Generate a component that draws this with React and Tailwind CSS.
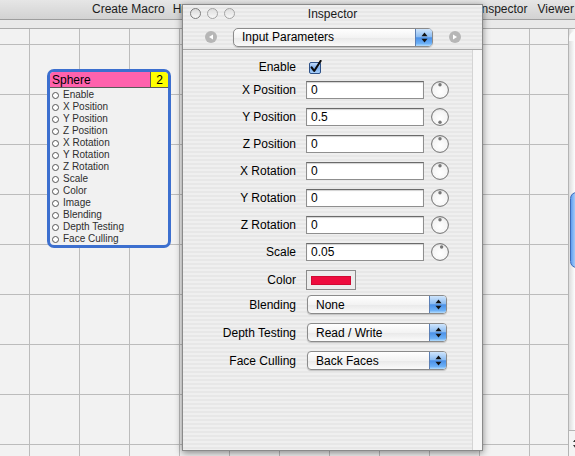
import React from 'react';

// Quartz Composer editor: canvas with a Sphere patch and the floating Inspector panel

const NODE_PORTS = [
  'Enable', 'X Position', 'Y Position', 'Z Position', 'X Rotation', 'Y Rotation',
  'Z Rotation', 'Scale', 'Color', 'Image', 'Blending', 'Depth Testing', 'Face Culling',
];

const FIELDS = [
  { label: 'X Position', value: '0', knob: 0 },
  { label: 'Y Position', value: '0.5', knob: 0.5 },
  { label: 'Z Position', value: '0', knob: 0 },
  { label: 'X Rotation', value: '0', knob: 0 },
  { label: 'Y Rotation', value: '0', knob: 0 },
  { label: 'Z Rotation', value: '0', knob: 0 },
  { label: 'Scale', value: '0.05', knob: 0.05 },
];

const Stepper = () => (
  <svg width="7" height="11" viewBox="0 0 7 11">
    <polygon points="3.5,0.5 0.5,4.3 6.5,4.3" fill="#111" />
    <polygon points="0.5,6.7 6.5,6.7 3.5,10.5" fill="#111" />
  </svg>
);

const Popup = ({ label, className = '' }) => (
  <div
    className={`flex h-[19px] items-stretch rounded-[4px] border border-[#8b8b8b] bg-[linear-gradient(to_bottom,#ffffff,#f3f3f3_50%,#e9e9e9_52%,#fafafa)] shadow-[0_1px_1px_rgba(0,0,0,0.18)] ${className}`}
  >
    <span className="flex flex-1 items-center pl-[8px] text-[12px] leading-none text-black">{label}</span>
    <span className="flex w-[17px] items-center justify-center rounded-r-[3px] border-l border-[#5b7fb4] bg-[linear-gradient(to_bottom,#cfe5fc,#8dbdf2_45%,#4b91e8_52%,#6cb0f6_85%,#b4dcfc)]">
      <Stepper />
    </span>
  </div>
);

const Knob = ({ value }) => {
  const a = value * 2 * Math.PI;
  const dx = 9 + Math.sin(a) * 5.2;
  const dy = 9 - Math.cos(a) * 5.2;
  return (
    <svg width="18" height="18" viewBox="0 0 18 18" className="ml-[7px] shrink-0">
      <defs>
        <radialGradient id="knobFill" cx="50%" cy="60%" r="60%">
          <stop offset="0" stopColor="#ffffff" />
          <stop offset="0.75" stopColor="#f4f4f4" />
          <stop offset="1" stopColor="#d6d6d6" />
        </radialGradient>
      </defs>
      <circle cx="9" cy="9" r="8.4" fill="url(#knobFill)" stroke="#707070" strokeWidth="1" />
      <circle cx={dx} cy={dy} r="1.7" fill="#777" />
    </svg>
  );
};

const Checkbox = () => (
  <svg width="14" height="14" viewBox="0 0 14 14" className="ml-[12px]">
    <defs>
      <linearGradient id="cbFill" x1="0" y1="0" x2="0" y2="1">
        <stop offset="0" stopColor="#c6defa" />
        <stop offset="0.5" stopColor="#7fb0ee" />
        <stop offset="1" stopColor="#a8d0fa" />
      </linearGradient>
    </defs>
    <rect x="1.5" y="2.5" width="11" height="11" rx="1.5" fill="url(#cbFill)" stroke="#2f5288" />
    <path d="M3.6 7.4 L6.2 11 L12.6 1" fill="none" stroke="#0b0b0b" strokeWidth="2.1" strokeLinecap="round" strokeLinejoin="round" />
  </svg>
);

const NavButton = ({ dir }) => (
  <span className="flex h-[12px] w-[12px] items-center justify-center rounded-full bg-[#b6b6b6]">
    <svg width="6" height="6" viewBox="0 0 6 6">
      {dir === 'left' ? (
        <polygon points="1,3 5,0.5 5,5.5" fill="#fff" />
      ) : (
        <polygon points="5,3 1,0.5 1,5.5" fill="#fff" />
      )}
    </svg>
  </span>
);

const Label = ({ children }) => (
  <span className="w-[113px] shrink-0 text-right text-[12px] leading-none text-black">{children}</span>
);

const SphereNode = () => (
  <div className="absolute left-[47px] top-[40px] flex h-[179px] w-[124px] flex-col overflow-hidden rounded-[7px] border-[3px] border-[#3c6fcf] bg-[#f1f1f1]">
    <div className="flex h-[16px] shrink-0 border-b border-[#5a5a5a]">
      <span className="flex flex-1 items-center bg-[#ff62ad] pl-[2px] text-[12px] leading-none text-black">Sphere</span>
      <span className="flex w-[18px] items-center justify-center border-l border-[#5a5a5a] bg-[#ffff00] text-[12px] leading-none text-black">2</span>
    </div>
    <div className="flex flex-col pt-[1px]">
      {NODE_PORTS.map((p) => (
        <div key={p} className="flex h-[12px] items-center pl-[2px]">
          <span className="h-[7px] w-[7px] shrink-0 rounded-full border border-[#555] bg-white" />
          <span className="ml-[4px] text-[10px] leading-none text-[#2e2e2e]">{p}</span>
        </div>
      ))}
    </div>
  </div>
);

const Inspector = () => (
  <div className="absolute left-[182px] top-[4px] flex h-[447px] w-[301px] flex-col border border-[#8a8a8a] bg-[repeating-linear-gradient(to_bottom,#efefef_0px,#efefef_2px,#e7e7e7_2px,#e7e7e7_4px)] shadow-[0_2px_7px_rgba(0,0,0,0.45)]">
    {/* title bar */}
    <div className="grid h-[17px] shrink-0 grid-cols-[1fr_auto_1fr] items-center">
      <div className="flex items-center gap-[6px] pl-[7px]">
        <span className="h-[11px] w-[11px] rounded-full border border-[#7d7d7d] bg-[linear-gradient(to_bottom,#d9d9d9,#f7f7f7)]" />
        <span className="h-[11px] w-[11px] rounded-full border border-[#a3a3a3] bg-[linear-gradient(to_bottom,#dedede,#f7f7f7)]" />
        <span className="h-[11px] w-[11px] rounded-full border border-[#a3a3a3] bg-[linear-gradient(to_bottom,#dedede,#f7f7f7)]" />
      </div>
      <span className="text-[12px] leading-none text-[#1a1a1a]">Inspector</span>
      <span />
    </div>
    {/* popup row */}
    <div className="flex h-[28px] shrink-0 items-center border-b border-[#a9a9a9] pl-[22px] pt-[3px]">
      <NavButton dir="left" />
      <Popup label="Input Parameters" className="ml-[16px] w-[200px] rounded-[5px]" />
      <span className="ml-[16px]">
        <NavButton dir="right" />
      </span>
    </div>
    {/* body */}
    <div className="flex flex-1">
      <div className="flex flex-1 flex-col pt-[10px]">
        <div className="flex h-[14px] items-center">
          <Label>Enable</Label>
          <Checkbox />
        </div>
        <div className="mt-[7px] flex flex-col gap-[9px]">
          {FIELDS.map((f) => (
            <div key={f.label} className="flex h-[18px] items-center">
              <Label>{f.label}</Label>
              <div className="ml-[10px] flex h-[18px] w-[118px] items-center border border-[#8f8f8f] border-t-[#6a6a6a] bg-white pl-[4px] text-[12px] leading-none text-black shadow-[inset_0_1px_1px_rgba(0,0,0,0.18)]">
                {f.value}
              </div>
              <Knob value={f.knob} />
            </div>
          ))}
        </div>
        <div className="mt-[9px] flex h-[20px] items-center">
          <Label>Color</Label>
          <div className="ml-[10px] flex h-[20px] w-[50px] items-center justify-center border border-[#8a8a8a] bg-[#ececec]">
            <span className="h-[9px] w-[40px] bg-[#ee0c3e] shadow-[inset_0_0_0_1px_rgba(120,0,20,0.25)]" />
          </div>
        </div>
        <div className="mt-[5px] flex h-[19px] items-center">
          <Label>Blending</Label>
          <Popup label="None" className="ml-[11px] w-[140px]" />
        </div>
        <div className="mt-[9px] flex h-[19px] items-center">
          <Label>Depth Testing</Label>
          <Popup label="Read / Write" className="ml-[11px] w-[140px]" />
        </div>
        <div className="mt-[9px] flex h-[19px] items-center">
          <Label>Face Culling</Label>
          <Popup label="Back Faces" className="ml-[11px] w-[140px]" />
        </div>
      </div>
      <div className="w-[10px] border-l border-[#d4d4d4] bg-[#f7f7f7]" />
    </div>
  </div>
);

export default function App() {
  return (
    <div className="relative h-[456px] w-[575px] overflow-hidden bg-[#f2f2f2] font-['Liberation_Sans',Arial,sans-serif]">
      <div className="flex h-[456px] w-[583px] flex-col">
        {/* window toolbar */}
        <div className="flex h-[20px] shrink-0 items-center border-b border-[#9d9d9d] bg-[linear-gradient(to_bottom,#e6e6e6,#d2d2d2)] pb-[2px] text-[12px] leading-none text-[#1c1c1c]">
          <span className="ml-[92px]">Create Macro</span>
          <span className="ml-[8px]">Hide Library</span>
          <span className="ml-auto">Inspector</span>
          <span className="ml-[10px] mr-[9px]">Viewer</span>
        </div>
        <div className="h-[9px] shrink-0 border-b border-[#ababab] bg-[#e9e9e9]" />
        {/* editor area */}
        <div className="flex flex-1">
          <div className="relative flex-1 bg-[#f2f2f2] bg-[linear-gradient(to_right,#bcbcbc_1px,transparent_1px),linear-gradient(to_bottom,#bcbcbc_1px,transparent_1px)] bg-[size:50px_50px] bg-[position:29px_15px]">
            <SphereNode />
          </div>
          <div className="flex w-[15px] flex-col border-l border-[#b4b4b4] bg-[linear-gradient(to_right,#dcdcdc,#fbfbfb_40%,#f0f0f0)]">
            <div className="mt-[2px] h-[10px] rounded-t-[7px] bg-[#fafafa]" />
            <div className="ml-[1px] mt-[151px] h-[76px] rounded-[7px] border border-[#3d6ab8] bg-[linear-gradient(to_right,#5f9ef0,#a9cffa_40%,#4f8fe6)]" />
            <div className="mt-auto flex h-[26px] flex-col items-center justify-center gap-[3px] border-t border-[#b4b4b4] bg-[#f4f4f4]">
              <svg width="7" height="5" viewBox="0 0 7 5"><polygon points="3.5,0 0,5 7,5" fill="#333" /></svg>
              <svg width="7" height="5" viewBox="0 0 7 5"><polygon points="0,0 7,0 3.5,5" fill="#333" /></svg>
            </div>
          </div>
        </div>
      </div>
      <Inspector />
    </div>
  );
}
